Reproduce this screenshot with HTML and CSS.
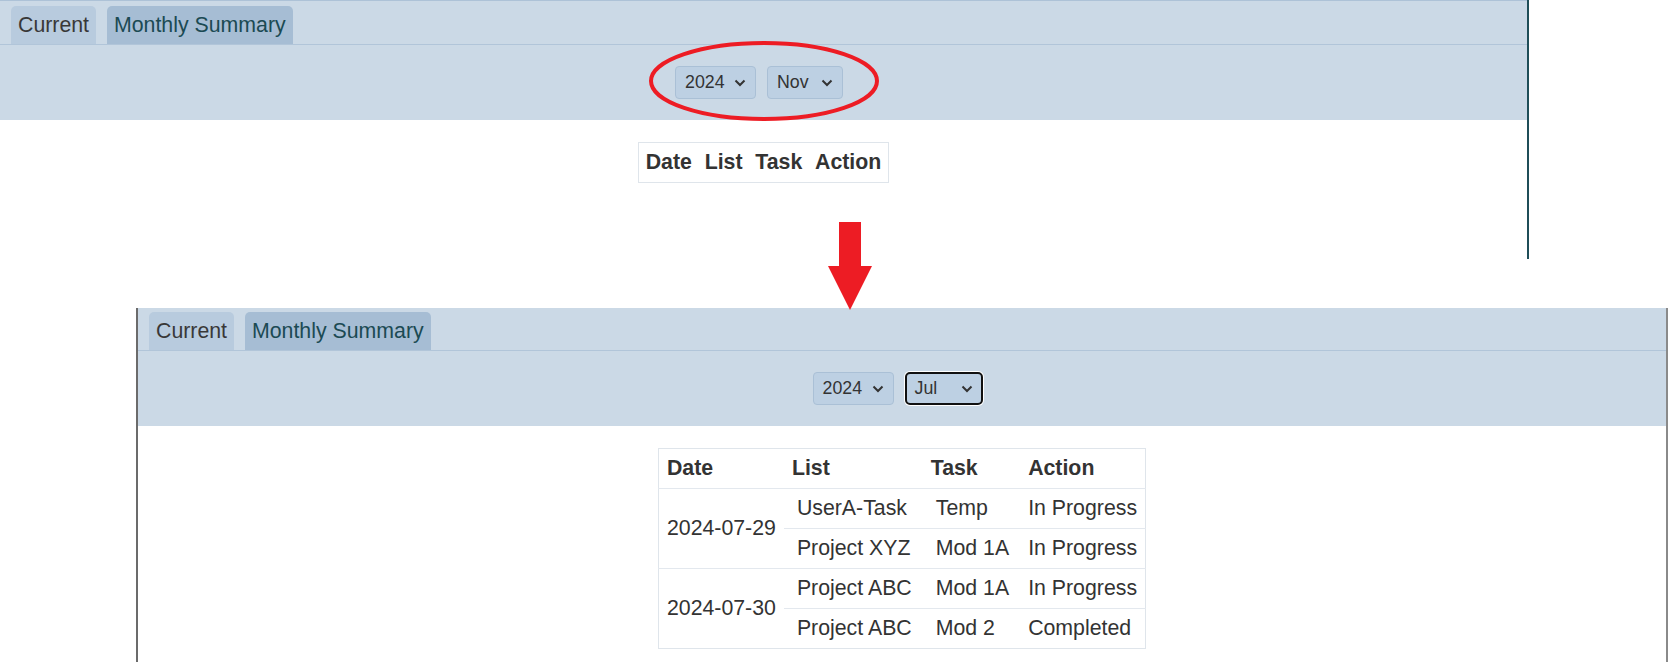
FILE: index.html
```html
<!DOCTYPE html>
<html lang="en">
<head>
    <meta charset="UTF-8">
    <title>Monthly Summary - before / after</title>
    <link rel="stylesheet" href="styles.css">
</head>
<body>
    <div class="canvas">
        <!-- Before: November, empty table -->
        <div class="shot shot-top">
            <div class="panel">
                <div class="tabs">
                    <span class="tab">Current</span>
                    <span class="tab tab-active">Monthly Summary</span>
                </div>
                <div class="controls">
                    <div class="select select-year">
                        <span>2024</span>
                        <svg class="chev" width="12" height="8" viewBox="0 0 12 8"><polyline points="1.5,1.5 6,6 10.5,1.5"/></svg>
                    </div>
                    <div class="select select-month">
                        <span>Nov</span>
                        <svg class="chev" width="12" height="8" viewBox="0 0 12 8"><polyline points="1.5,1.5 6,6 10.5,1.5"/></svg>
                    </div>
                </div>
            </div>
            <table class="summary summary-empty">
                <tr><th>Date</th><th>List</th><th>Task</th><th>Action</th></tr>
            </table>
        </div>

        <!-- After: July, filled table -->
        <div class="shot shot-bottom">
            <div class="panel">
                <div class="tabs">
                    <span class="tab">Current</span>
                    <span class="tab tab-active">Monthly Summary</span>
                </div>
                <div class="controls">
                    <div class="select select-year">
                        <span>2024</span>
                        <svg class="chev" width="12" height="8" viewBox="0 0 12 8"><polyline points="1.5,1.5 6,6 10.5,1.5"/></svg>
                    </div>
                    <div class="select select-month focused">
                        <span>Jul</span>
                        <svg class="chev" width="12" height="8" viewBox="0 0 12 8"><polyline points="1.5,1.5 6,6 10.5,1.5"/></svg>
                    </div>
                </div>
            </div>
            <table class="summary">
                <tr><th>Date</th><th>List</th><th>Task</th><th>Action</th></tr>
                <tr>
                    <td rowspan="2">2024-07-29</td>
                    <td class="sub">UserA-Task</td>
                    <td class="sub">Temp</td>
                    <td>In Progress</td>
                </tr>
                <tr>
                    <td class="sub">Project XYZ</td>
                    <td class="sub">Mod 1A</td>
                    <td>In Progress</td>
                </tr>
                <tr>
                    <td rowspan="2">2024-07-30</td>
                    <td class="sub">Project ABC</td>
                    <td class="sub">Mod 1A</td>
                    <td>In Progress</td>
                </tr>
                <tr>
                    <td class="sub">Project ABC</td>
                    <td class="sub">Mod 2</td>
                    <td>Completed</td>
                </tr>
            </table>
        </div>

        <!-- Annotations -->
        <svg class="mark-ellipse" width="240" height="90" viewBox="0 0 240 90">
            <ellipse cx="118" cy="43" rx="113" ry="38"/>
        </svg>
        <svg class="mark-arrow" width="48" height="92" viewBox="0 0 48 92">
            <polygon points="13,2 35,2 35,46 46,46 24,90 2,46 13,46"/>
        </svg>
    </div>
</body>
</html>
```

FILE: styles.css
```css
body {
    margin: 0;
    padding: 0;
    background-color: #fff;
    font-family: "Liberation Sans", Arial, sans-serif;
    color: #333;
    overflow: hidden;
}

.canvas {
    position: relative;
    width: 1669px;
    height: 662px;
}

/* Screenshot frames */
.shot {
    position: absolute;
    background-color: #fff;
}

.shot-top {
    left: 0;
    top: 0;
    width: 1527px;
    height: 259px;
    border-right: 2px solid #1f4e58;
}

.shot-bottom {
    left: 136px;
    top: 308px;
    width: 1528px;
    height: 354px;
    border-left: 2px solid #6b6b6b;
    border-right: 2px solid #8a8a8a;
}

/* Header panel */
.panel {
    background-color: #cbd9e6;
}

.shot-top .panel {
    border-top: 1px solid #adc2d7;
}

.tabs {
    display: flex;
    gap: 11px;
    padding: 5px 0 0 11px;
    border-bottom: 1px solid #b1c5d9;
}

.shot-bottom .tabs {
    padding-top: 4px;
}

.tab {
    height: 38px;
    line-height: 38px;
    padding: 0 7px;
    font-size: 21.3px;
    color: #383838;
    background-color: #b8cbde;
    border-radius: 5px 5px 0 0;
}

.tab-active {
    background-color: #a6bdd4;
    color: #1b4a53;
}

.controls {
    display: flex;
    justify-content: center;
    align-items: center;
    gap: 11px;
    height: 75px;
    padding-right: 9px; /* selects sit a bit left of centre */
}

.select {
    display: flex;
    align-items: center;
    justify-content: space-between;
    box-sizing: border-box;
    height: 33px;
    padding: 0 9px;
    font-size: 17.8px;
    color: #333;
    background-color: #bdd0e3;
    border: 1px solid #aac0d6;
    border-radius: 4px;
}

.select-year {
    width: 81px;
}

.select-month {
    width: 76px;
}

.select.focused {
    width: 78px;
    padding: 0 8px;
    border: 2px solid #111;
    border-radius: 5px;
    box-shadow: 0 0 0 1px #fff;
}

.chev polyline {
    fill: none;
    stroke: #333;
    stroke-width: 2;
}

/* Summary table */
.summary {
    margin: 22px auto 0;
    border-collapse: collapse;
    border: 1px solid #dfe5eb;
    font-size: 21.3px;
    color: #333;
}

.summary th,
.summary td {
    height: 39px;
    padding: 0 8px;
    text-align: left;
    white-space: nowrap;
}

.summary-empty th {
    padding: 0 6.4px;
}

.summary th {
    font-weight: bold;
}

.summary td {
    border-top: 1px solid #e3e8ee;
}

.summary td.sub {
    padding: 0 11px 0 13px;
}

/* Red annotations */
.mark-ellipse {
    position: absolute;
    left: 646px;
    top: 38px;
}

.mark-ellipse ellipse {
    fill: none;
    stroke: #ed1c24;
    stroke-width: 4;
}

.mark-arrow {
    position: absolute;
    left: 826px;
    top: 220px;
}

.mark-arrow polygon {
    fill: #ed1c24;
}
```
